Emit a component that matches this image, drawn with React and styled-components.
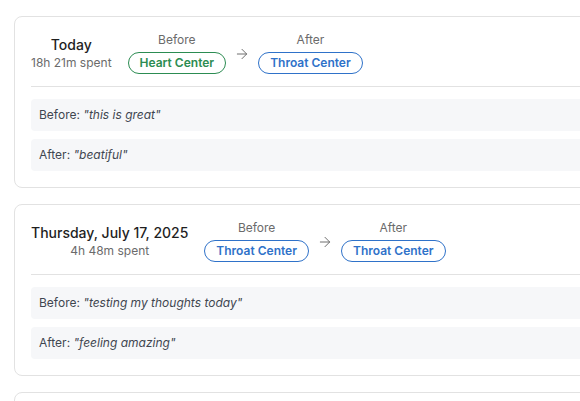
import React from 'react'
import styled, { createGlobalStyle } from 'styled-components'
import { ArrowRight } from 'lucide-react'

const GlobalStyle = createGlobalStyle`
  body {
    margin: 0;
    background: #ffffff;
    overflow: hidden;
    font-family: Inter, "Noto Sans", "Liberation Sans", sans-serif;
  }
`

const palette = {
  border: '#e2e2e2',
  ink: '#1f1f1f',
  muted: '#6b6b6b',
  note: '#f6f7f9',
  noteText: '#3f4650',
  green: '#2c8c52',
  blue: '#2f72c9'
}

const List = styled.div`
  display: flex;
  flex-direction: column;
  gap: 16px;
  padding: 16px 0 0 14px;
  width: 620px;
  height: 385px;
  overflow: hidden;
`

const Card = styled.div`
  flex-shrink: 0;
  border: 1px solid ${palette.border};
  border-radius: 8px;
  padding: 15px 0 16px 16px;
  background: #fff;
  min-height: ${p => (p.$placeholder ? '120px' : 'auto')};
`

const Header = styled.div`
  display: flex;
  align-items: center;
  gap: 16px;
  padding-bottom: 12px;
  border-bottom: 1px solid ${palette.border};
  margin-bottom: 12px;
`

const DateBlock = styled.div`
  display: flex;
  flex-direction: column;
  align-items: center;
  gap: 1px;
`

const DateTitle = styled.div`
  font-size: 14px;
  font-weight: 500;
  color: ${palette.ink};
  line-height: 18px;
`

const Spent = styled.div`
  font-size: 12px;
  color: ${palette.muted};
  line-height: 16px;
`

const Transition = styled.div`
  display: flex;
  align-items: center;
  gap: 8px;
`

const Column = styled.div`
  display: flex;
  flex-direction: column;
  align-items: center;
  gap: 4px;
`

const Label = styled.div`
  font-size: 12px;
  color: ${palette.muted};
  line-height: 16px;
`

const Pill = styled.span`
  display: inline-block;
  border: 1px solid ${p => p.$color};
  color: ${p => p.$color};
  border-radius: 999px;
  padding: 2px 11px;
  font-size: 12px;
  font-weight: 600;
  line-height: 16px;
  white-space: nowrap;
`

const Arrow = styled(ArrowRight)`
  color: #6f6f6f;
  margin-top: 2px;
`

const Notes = styled.div`
  display: flex;
  flex-direction: column;
  gap: 8px;
`

const Note = styled.div`
  background: ${palette.note};
  border-radius: 4px;
  padding: 8px;
  font-size: 12px;
  line-height: 16px;
  color: ${palette.noteText};
`

const Quote = styled.em`
  font-style: italic;
`

const centerColor = name => (name.startsWith('Heart') ? palette.green : palette.blue)

const entries = [
  {
    date: 'Today',
    spent: '18h 21m spent',
    before: 'Heart Center',
    after: 'Throat Center',
    beforeNote: 'this is great',
    afterNote: 'beatiful'
  },
  {
    date: 'Thursday, July 17, 2025',
    spent: '4h 48m spent',
    before: 'Throat Center',
    after: 'Throat Center',
    beforeNote: 'testing my thoughts today',
    afterNote: 'feeling amazing'
  }
]

const Entry = ({ entry }) => (
  <Card>
    <Header>
      <DateBlock>
        <DateTitle>{entry.date}</DateTitle>
        <Spent>{entry.spent}</Spent>
      </DateBlock>
      <Transition>
        <Column>
          <Label>Before</Label>
          <Pill $color={centerColor(entry.before)}>{entry.before}</Pill>
        </Column>
        <Arrow size={16} strokeWidth={1.5} />
        <Column>
          <Label>After</Label>
          <Pill $color={centerColor(entry.after)}>{entry.after}</Pill>
        </Column>
      </Transition>
    </Header>
    <Notes>
      <Note>
        Before: <Quote>"{entry.beforeNote}"</Quote>
      </Note>
      <Note>
        After: <Quote>"{entry.afterNote}"</Quote>
      </Note>
    </Notes>
  </Card>
)

const App = () => (
  <>
    <GlobalStyle />
    <List>
      {entries.map((entry, i) => (
        <Entry key={i} entry={entry} />
      ))}
      {/* next entry, scrolled below the fold */}
      <Card $placeholder />
    </List>
  </>
)

export default App
